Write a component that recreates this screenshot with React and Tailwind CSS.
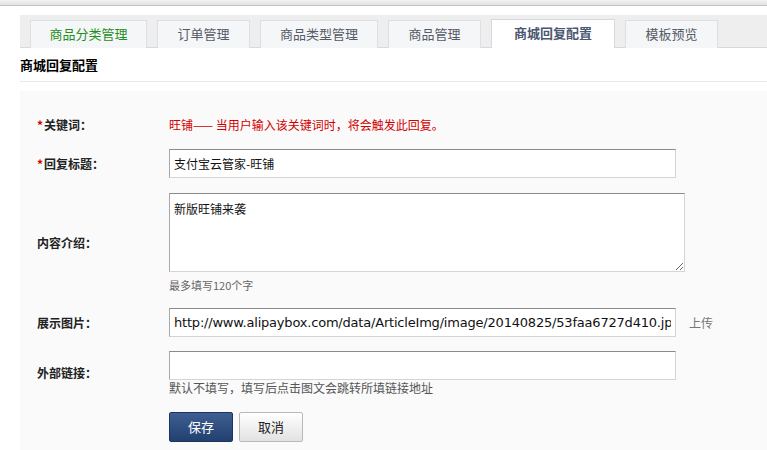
import React from 'react';

const tabs = [
  { id: 'cat', label: '商品分类管理', w: 'w-[117px]', color: 'text-[#1f8f1f]' },
  { id: 'order', label: '订单管理', w: 'w-[93px]', color: 'text-[#555a66]' },
  { id: 'type', label: '商品类型管理', w: 'w-[118px]', color: 'text-[#555a66]' },
  { id: 'goods', label: '商品管理', w: 'w-[93px]', color: 'text-[#555a66]' },
  { id: 'reply', label: '商城回复配置', w: 'w-[124px]', color: 'text-[#4b5670]', active: true },
  { id: 'tpl', label: '模板预览', w: 'w-[93px]', color: 'text-[#555a66]' },
];

const font = 'font-["Noto_Sans_CJK_SC",sans-serif]';

const Label = ({ children, required }) => (
  <div className="w-[149px] shrink-0 pl-[17px] text-[12px] font-bold text-[#222]">
    {required && <span className="text-[#c00] mr-[1px]">*</span>}
    {children}
  </div>
);

const inputCls =
  'h-[29px] w-[507px] bg-white border border-[#d4d4d4] border-t-[#8a8a8a] border-l-[#a8a8a8] px-[4px] text-[12px] text-[#111] outline-none';

export default function App() {
  return (
    <div className={`w-[767px] h-[450px] bg-white overflow-hidden ${font}`}>
      {/* top strip */}
      <div className="h-[6px] bg-gradient-to-b from-[#f2f2f2] to-[#e2e2e2] border-b border-[#c4c4c4]" />

      <div className="pl-[20px] pt-[9px]">
        {/* tabs */}
        <div className="h-[33px] bg-[#eeeeee] flex items-end gap-[10px] pl-[10px] border-b border-[#d6d9de]">
          {tabs.map(t => (
            <div
              key={t.id}
              className={`${t.w} mb-[-1px] flex items-center justify-center pb-[2px] text-[13px] border border-b-0 ${t.color} ${
                t.active
                  ? 'bg-white border-[#d6d9de] font-bold h-[29px]'
                  : 'bg-[#f5f6f8] border-[#dcdfe3] h-[28px]'
              }`}
            >
              {t.label}
            </div>
          ))}
        </div>

        <div className="h-[34px] flex items-center text-[13px] font-bold text-black border-b border-[#e8e8e8]">
          商城回复配置
        </div>

        {/* form panel */}
        <div className="mt-[9px] bg-[#fafafa] h-[400px] pt-[24px]">
          <div className="flex items-center h-[20px]">
            <Label required>关键词：</Label>
            <div className="text-[12px] text-[#d20000]">
              旺铺—— 当用户输入该关键词时，将会触发此回复。
            </div>
          </div>

          <div className="flex items-center mt-[14px]">
            <Label required>回复标题：</Label>
            <input className={inputCls} defaultValue="支付宝云管家-旺铺" />
          </div>

          <div className="flex items-center mt-[15px]">
            <Label>内容介绍：</Label>
            <div>
              <textarea
                className="block h-[79px] w-[516px] bg-white border border-[#d4d4d4] border-t-[#8a8a8a] border-l-[#a8a8a8] px-[4px] pt-[6px] text-[12px] text-[#111] outline-none"
                defaultValue="新版旺铺来袭"
              />
              <div className="text-[11px] text-[#666] mt-[6px] leading-[14px]">最多填写120个字</div>
            </div>
          </div>

          <div className="flex items-center mt-[16px]">
            <Label>展示图片：</Label>
            <input
              className={`${inputCls} text-[13px] tracking-[-0.2px] font-["DejaVu_Sans",sans-serif]`}
              defaultValue="http://www.alipaybox.com/data/ArticleImg/image/20140825/53faa6727d410.jpg"
            />
            <span className="ml-[13px] text-[12px] text-[#777]">上传</span>
          </div>

          <div className="flex items-center mt-[14px]">
            <Label>外部链接：</Label>
            <div>
              <input className={`block ${inputCls}`} />
              <div className="text-[12px] text-[#555] leading-[14px] mt-[1px]">
                默认不填写，填写后点击图文会跳转所填链接地址
              </div>
            </div>
          </div>

          <div className="flex items-center mt-[17px] pl-[149px] gap-[6px]">
            <button className="w-[64px] h-[30px] rounded-[2px] bg-gradient-to-b from-[#3e5f92] to-[#22406f] border border-[#1c3560] text-white text-[13px]">
              保存
            </button>
            <button className="w-[64px] h-[30px] rounded-[2px] bg-gradient-to-b from-[#ffffff] to-[#e2e2e2] border border-[#b9b9b9] text-[#222] text-[13px]">
              取消
            </button>
          </div>
        </div>
      </div>
    </div>
  );
}
